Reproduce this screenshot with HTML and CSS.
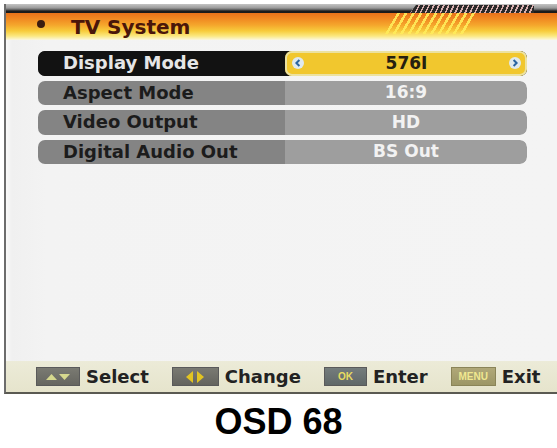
FILE: index.html
```html
<!DOCTYPE html>
<html>
<head>
<meta charset="utf-8">
<link rel="stylesheet" href="styles.css">
</head>
<body>
<div class="screen">
  <div class="header">
    <div class="topbar"></div>
    <div class="titlebar">
      <span class="bullet"></span>
      <span class="title">TV System</span>
    </div>
    <div class="tab"></div>
    <div class="stripes"></div>
  </div>
  <div class="menu">
    <div class="row selected">
      <div class="label">Display Mode</div>
      <div class="value">
        <span class="arrow">
          <svg width="12" height="12" viewBox="0 0 12 12"><circle cx="6" cy="6" r="6" fill="#dfe9ee"/><path d="M7.4 3 L4.4 6 L7.4 9" fill="none" stroke="#2a64a0" stroke-width="2"/></svg>
        </span>
        <span class="vtext">576I</span>
        <span class="arrow">
          <svg width="12" height="12" viewBox="0 0 12 12"><circle cx="6" cy="6" r="6" fill="#dfe9ee"/><path d="M4.6 3 L7.6 6 L4.6 9" fill="none" stroke="#2a64a0" stroke-width="2"/></svg>
        </span>
      </div>
    </div>
    <div class="row">
      <div class="label">Aspect Mode</div>
      <div class="value"><span class="vtext">16:9</span></div>
    </div>
    <div class="row">
      <div class="label">Video Output</div>
      <div class="value"><span class="vtext">HD</span></div>
    </div>
    <div class="row">
      <div class="label">Digital Audio Out</div>
      <div class="value"><span class="vtext">BS Out</span></div>
    </div>
  </div>
  <div class="footer">
    <div class="hint">
      <span class="key key-sel">
        <svg width="26" height="10" viewBox="0 0 26 10"><path d="M1 8 L6.5 2 L12 8 Z" fill="#d6d88e"/><path d="M14 2 L25 2 L19.5 8 Z" fill="#d6d88e"/></svg>
      </span>
      <span class="htext">Select</span>
    </div>
    <div class="hint">
      <span class="key key-chg">
        <svg width="20" height="12" viewBox="0 0 20 12"><path d="M8 0 L8 12 L1 6 Z" fill="#e2c422"/><path d="M12 0 L12 12 L19 6 Z" fill="#e2c422"/></svg>
      </span>
      <span class="htext">Change</span>
    </div>
    <div class="hint">
      <span class="key key-ok"><span class="ktext">OK</span></span>
      <span class="htext">Enter</span>
    </div>
    <div class="hint">
      <span class="key key-menu"><span class="ktext">MENU</span></span>
      <span class="htext">Exit</span>
    </div>
  </div>
</div>
<div class="caption">OSD 68</div>
</body>
</html>
```

FILE: styles.css
```css
html, body {
  margin: 0;
  padding: 0;
  background: #ffffff;
}

body {
  width: 557px;
  height: 448px;
  overflow: hidden;
  font-family: "DejaVu Sans", "Liberation Sans", sans-serif;
}

.screen {
  margin: 4px 0 0 4px;
  width: 551px;
  height: 388px;
  border-left: 2px solid #6c6c6c;
  border-bottom: 2px solid #5a5a52;
  display: flex;
  flex-direction: column;
  background: linear-gradient(to right, #f9f9f9 0px, #f0f0f0 6px, #f3f3f3 40px, #f4f4f4 100%);
}

.header {
  position: relative;
  height: 36px;
  flex: none;
}

.topbar {
  height: 9px;
  background: linear-gradient(to bottom, #c4c4c4 0px, #9a9a9a 4px, #555 6px, #1c1c1c 7px, #1a1a1a 9px);
}

.titlebar {
  height: 27px;
  display: flex;
  align-items: center;
  padding-left: 31px;
  background: linear-gradient(to bottom, #e9721a 0px, #f08a22 6px, #f5a62c 12px, #f8cc3c 18px, #fbe880 23px, #fbf7e0 27px);
}

.bullet {
  width: 8px;
  height: 8px;
  border-radius: 50%;
  background: #3a1c10;
  margin-top: -6px;
}

.title {
  margin-left: 26px;
  font-weight: bold;
  font-size: 20px;
  color: #4a160a;
  line-height: 20px;
  margin-top: 0px;
}

.tab {
  position: absolute;
  left: 404px;
  top: 1px;
  width: 124px;
  height: 8px;
  background: repeating-linear-gradient(115deg, #2a2a2a 0px, #2a2a2a 3px, #d8b0b0 3px, #d8b0b0 4.5px);
  clip-path: polygon(6px 0, 100% 0, 100% 100%, 0 100%);
}

.stripes {
  position: absolute;
  left: 379px;
  top: 9px;
  width: 92px;
  height: 21px;
  background: repeating-linear-gradient(120deg, transparent 0px, transparent 4px, rgba(255, 236, 90, 0.9) 4px, rgba(255, 236, 90, 0.9) 6.5px);
  clip-path: polygon(10px 0, 100% 0, 82px 100%, 0 100%);
}

.menu {
  flex: 1;
  padding: 11px 30px 0 32px;
  display: flex;
  flex-direction: column;
  gap: 5px;
}

.row {
  display: flex;
  height: 24.5px;
  border-radius: 7px;
  overflow: hidden;
  font-weight: bold;
  font-size: 18px;
}

.label {
  width: 222px;
  flex: none;
  background: #848484;
  color: #1c1c1c;
  padding-left: 25px;
  display: flex;
  align-items: center;
  line-height: 1;
}

.value {
  flex: 1;
  background: #9e9e9e;
  color: #f2f2f2;
  display: flex;
  align-items: center;
  justify-content: center;
  position: relative;
  border-radius: 0 7px 7px 0;
  font-size: 17px;
  line-height: 1;
}

.selected .label {
  background: #121212;
  color: #e6e6e6;
  border-radius: 7px 0 0 7px;
}

.selected {
  background: #121212;
}

.selected .value {
  background: #f1c72e;
  color: #262010;
  box-shadow: inset 0 0 0 2px #ece2a0;
  border-radius: 7px;
  justify-content: space-between;
  padding: 0 6px 0 7px;
}

.arrow {
  display: flex;
  width: 12px;
  height: 12px;
}

.footer {
  height: 31px;
  flex: none;
  background: linear-gradient(to bottom, #ecebd8 0px, #e6e4cc 100%);
  display: flex;
  align-items: center;
  padding-left: 30px;
  gap: 23px;
}

.hint {
  display: flex;
  align-items: center;
  gap: 6px;
}

.key {
  width: 44px;
  height: 19px;
  display: flex;
  align-items: center;
  justify-content: center;
  box-sizing: border-box;
  border: 1px solid #5a5a5a;
}

.key-sel {
  background: linear-gradient(to bottom, #7a7a72, #666660);
}

.key-chg {
  background: linear-gradient(to bottom, #7a7a72, #64645e);
  width: 47px;
}

.key-ok {
  background: linear-gradient(to bottom, #747c7c, #606868);
  width: 43px;
}

.key-menu {
  background: linear-gradient(to bottom, #b0a878, #9c9666);
  border-color: #8a8458;
  width: 45px;
}

.ktext {
  font-family: "Liberation Sans", sans-serif;
  font-size: 10px;
  font-weight: bold;
  color: #e8dc60;
}

.key-menu .ktext {
  color: #f0e890;
}

.htext {
  font-weight: bold;
  font-size: 18px;
  color: #222222;
  line-height: 1;
}

.caption {
  text-align: center;
  font-family: "Liberation Sans", Arial, sans-serif;
  font-weight: bold;
  font-size: 36px;
  color: #000000;
  margin-top: 8px;
  line-height: 40px;
}
```
